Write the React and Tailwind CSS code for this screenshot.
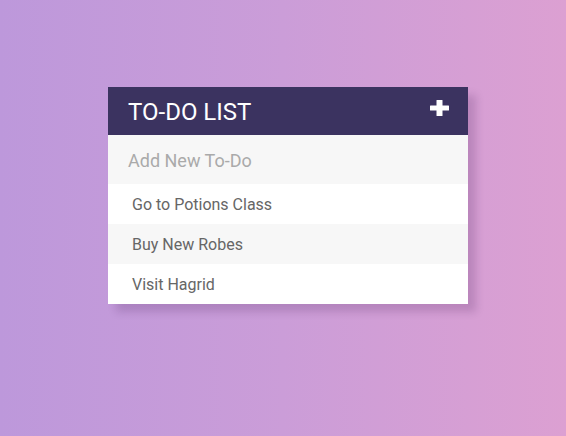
import React from "react";

export default function App() {
  const todos = ["Go to Potions Class", "Buy New Robes", "Visit Hagrid"];
  return (
    <div
      className="w-[566px] h-[436px] bg-[linear-gradient(to_right,#bd98db,#cb9dd8_50%,#dca0d2)] pt-[87px] pl-[108px]"
      style={{ fontFamily: "Roboto, 'Liberation Sans', sans-serif" }}
    >
      <div className="w-[360px] bg-white shadow-[8px_8px_8px_rgba(60,20,80,0.18)]">
        <div className="h-[48px] bg-[#3b3360] flex items-center justify-between pl-[20px] pr-[19px]">
          <h1 className="text-white text-[24px] font-normal leading-none pt-[2px]">TO-DO LIST</h1>
          <svg width="19" height="16" viewBox="0 0 19 16" className="mt-[-6px]">
            <rect x="6.5" y="0" width="6" height="16" rx="0.5" fill="#ffffff" />
            <rect x="0" y="5.5" width="19" height="5" rx="0.5" fill="#ffffff" />
          </svg>
        </div>
        <div className="h-[49px] bg-[#f7f7f7] flex items-center pl-[20px] pt-[1px]">
          <span className="text-[18px] text-[#aaaaaa]">Add New To-Do</span>
        </div>
        <ul>
          {todos.map((t, i) => (
            <li
              key={t}
              className={`h-[40px] flex items-center pl-[24px] pt-[2px] text-[16px] text-[#666666] ${
                i % 2 === 1 ? "bg-[#f7f7f7]" : "bg-white"
              }`}
            >
              {t}
            </li>
          ))}
        </ul>
      </div>
    </div>
  );
}
